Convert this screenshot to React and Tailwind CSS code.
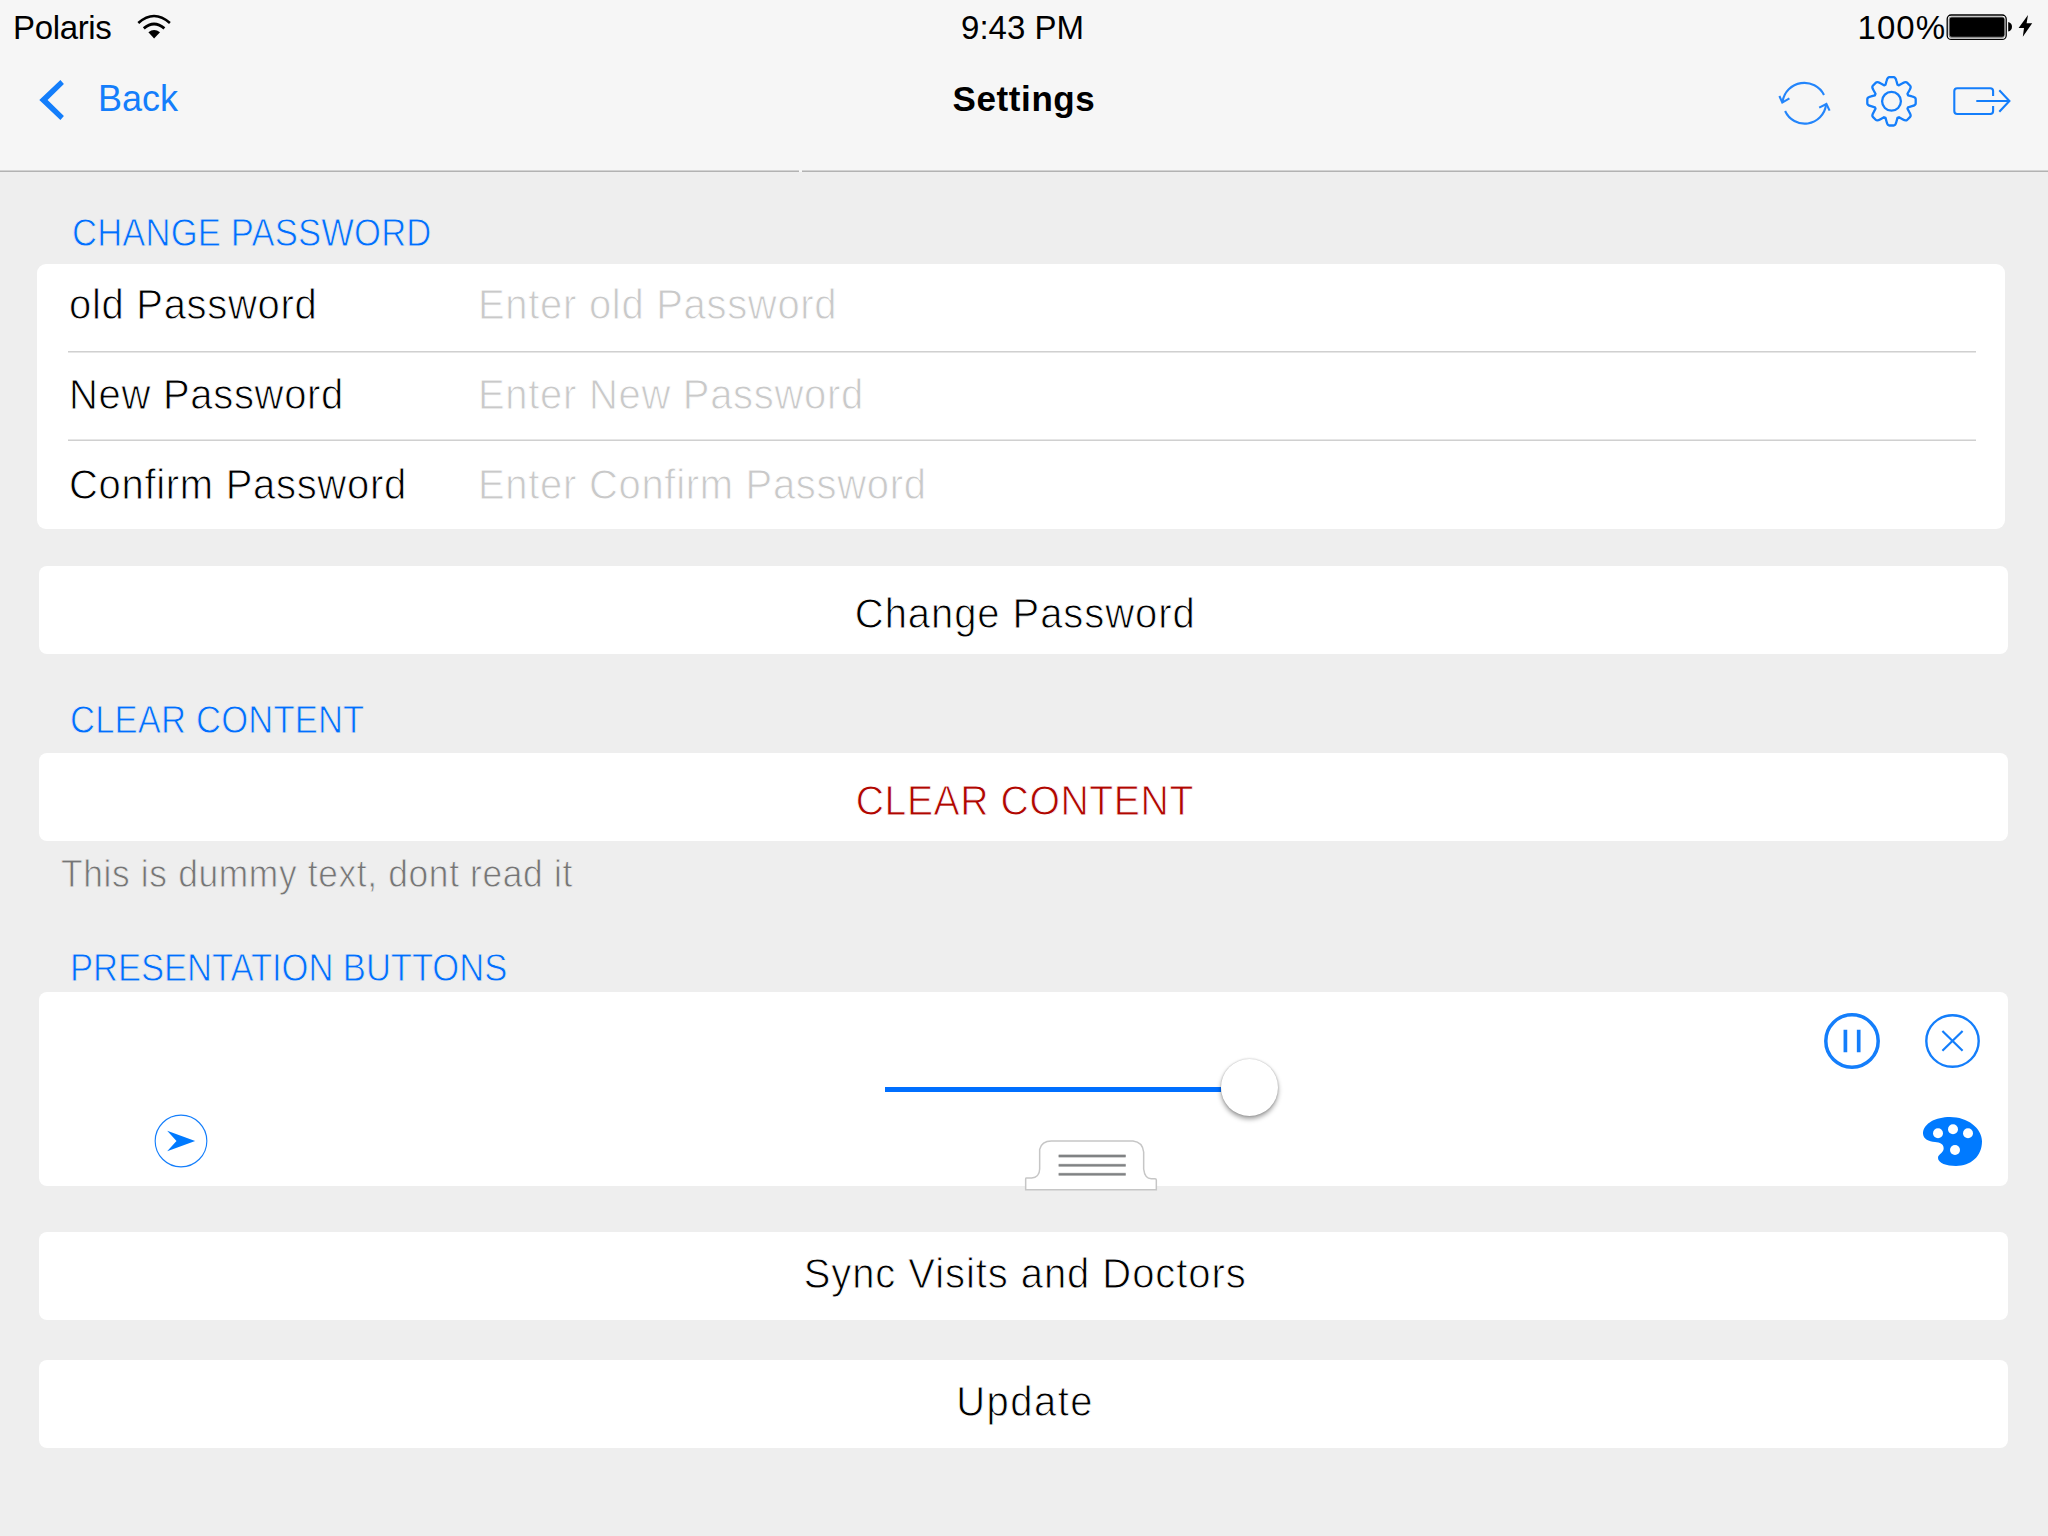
import React from "react";

const BLUE = "#147efb";

/* Light-weight Helvetica look: the stroke in the surface colour slims the glyphs. */
function Thin({ surface = "white", className = "", children }) {
  const stroke =
    surface === "white"
      ? "[-webkit-text-stroke:0.9px_#ffffff]"
      : "[-webkit-text-stroke:0.8px_#eeeeee]";
  return (
    <span className={`inline-block whitespace-nowrap ${stroke} ${className}`}>
      {children}
    </span>
  );
}

function WifiIcon() {
  return (
    <svg className="h-[55px] w-[36px]" viewBox="136 0 36 55" fill="none" stroke="#000">
      <path d="M138.3 23 Q154 9 169.9 23" strokeWidth="2.6" />
      <path d="M143.8 28.4 Q154 19.6 164.4 28.4" strokeWidth="2.8" />
      <path d="M148.4 32.2 Q154 27.6 160 32.2 L154.1 38.4 Z" fill="#000" stroke="none" />
    </svg>
  );
}

function BatteryIcon() {
  return (
    <svg className="h-[55px] w-[88px]" viewBox="1946 0 88 55">
      <rect x="1947.2" y="15" width="59" height="24.4" rx="4" fill="#fff" stroke="#000" strokeWidth="1.3" />
      <rect x="1948.6" y="16.5" width="56.2" height="21.4" rx="3" fill="#8d8d8d" />
      <rect x="1949.7" y="17.6" width="54.6" height="19.2" rx="2" fill="#000" />
      <path d="M2008.2 22 Q2012 23 2012 26.7 Q2012 30.4 2008.2 31.6 Z" fill="#000" />
      <path d="M2028 15 L2018.6 28 H2024 L2022.8 36.8 L2032.2 23.3 H2026.6 Z" fill="#000" />
    </svg>
  );
}

function BackIcon() {
  return (
    <svg className="h-[85px] w-[26px]" viewBox="39 55 26 85">
      <path d="M39.3 100 L60.4 79.9 L63.9 84 L47.6 100 L63.9 116 L60.4 120.1 Z" fill={BLUE} />
    </svg>
  );
}

function SyncIcon() {
  return (
    <svg className="h-[85px] w-[54px]" viewBox="1777 55 54 85" fill="none" stroke="#2385fb" strokeWidth="2.1">
      <path d="M1782.6 101.5 A22 22 0 0 1 1824 95" />
      <path d="M1779.4 96 L1782.3 102.6 L1789.4 98.4" />
      <path d="M1785.1 111 A21.5 21.5 0 0 0 1826 105" />
      <path d="M1819.2 107.6 L1826.4 104 L1829.6 110.6" />
    </svg>
  );
}

function gearPath() {
  const tooth = [
    [-6, -16.6],
    [-4.9, -20.5],
    [-4, -24.2],
    [-2.2, -24.2],
    [2.2, -24.2],
    [4, -24.2],
    [4.9, -20.5],
    [6, -16.6],
  ];
  let d = "";
  for (let i = 0; i < 8; i++) {
    const a = (i * Math.PI) / 4;
    const p = tooth.map(([x, y]) =>
      [x * Math.cos(a) - y * Math.sin(a), x * Math.sin(a) + y * Math.cos(a)]
        .map((v) => v.toFixed(2))
        .join(" ")
    );
    d += `${i === 0 ? "M" : "L"}${p[0]} L${p[1]} Q${p[2]} ${p[3]} L${p[4]} Q${p[5]} ${p[6]} L${p[7]} `;
  }
  return d + "Z";
}

function GearIcon() {
  return (
    <svg className="h-[85px] w-[54px]" viewBox="-26.5 -46.3 54 85" fill="none" stroke={BLUE} strokeWidth="2.3" strokeLinejoin="round">
      <path d={gearPath()} />
      <circle r="9.4" />
    </svg>
  );
}

function ExitIcon() {
  return (
    <svg className="h-[85px] w-[60px]" viewBox="1952 55 60 85" fill="none" stroke={BLUE} strokeWidth="2.1">
      <path d="M1993.1 96 V91 Q1993.1 88.2 1990.3 88.2 H1957.2 Q1954.3 88.2 1954.3 91 V111 Q1954.3 114 1957.2 114 H1990.3 Q1993.1 114 1993.1 111 V106" />
      <path d="M1976.3 101 H2009" />
      <path d="M1999.3 90.3 L2009.4 101 L1999.3 111.7" />
    </svg>
  );
}

function SendIcon() {
  return (
    <svg className="h-[54px] w-[54px]" viewBox="73.5 72 162 162">
      <circle cx="154.5" cy="153" r="77.5" fill="none" stroke={BLUE} strokeWidth="3.4" />
      <path d="M113 122 L197 153 L113 184 L141 153 Z" fill="#007aff" />
    </svg>
  );
}

function PauseIcon() {
  return (
    <svg className="size-[56px]" viewBox="0 0 56 56" fill="none" stroke={BLUE}>
      <circle cx="28" cy="28" r="26.2" strokeWidth="3.5" />
      <path d="M21.4 16.8 V39.2 M34.7 16.8 V39.2" strokeWidth="3.7" />
    </svg>
  );
}

function CloseIcon() {
  return (
    <svg className="size-[56px]" viewBox="0 0 56 56" fill="none" stroke={BLUE}>
      <ellipse cx="27.5" cy="28" rx="26.2" ry="25.8" strokeWidth="2.4" />
      <path d="M17.4 18 L37.6 37.8 M37.6 18 L17.4 37.8" strokeWidth="2.2" />
    </svg>
  );
}

function PaletteIcon() {
  return (
    <svg className="h-[49px] w-[59px]" viewBox="429 411 177 147">
      <path d="M429 458 C432 430 467 411 510 411 C562 411 606 444 606 484 C606 530 572 558 528 558 C500 558 474 549 474 534 C474 522 491 520 491 505 C491 492 480 487 465 486 C445 484 428 476 429 458 Z" fill="#007aff" />
      <g fill="#fff">
        <circle cx="474" cy="460" r="15" />
        <circle cx="519" cy="448" r="15" />
        <circle cx="564" cy="460" r="15" />
        <circle cx="525" cy="510" r="15" />
      </g>
    </svg>
  );
}

function DrawerTab() {
  return (
    <svg className="h-[51px] w-[134px]" viewBox="523 479 402 153">
      <path
        d="M528 628 V595 Q528 593 531 593 H546 C560 592 570 582 570 566 V507 C574 491 588 482 605 482 H850 C868 484 880 496 882 515 V566 C884 584 892 595 905 595 H916 Q920 595 920 599 V628 Z"
        fill="#fff"
        stroke="#c6c6c6"
        strokeWidth="4.5"
      />
      <path d="M627 527 H828 M627 555 H828 M627 582 H828" stroke="#c4c4c4" strokeWidth="10" />
      <path d="M627 527 H828 M627 555 H828 M627 582 H828" stroke="#808284" strokeWidth="6" />
    </svg>
  );
}

function SectionTitle({ className, tracking, children }) {
  return (
    <div className={`flex items-end ${className}`}>
      <Thin surface="gray" className={`origin-left scale-x-[0.91] text-[38px] leading-[44px] text-[#006eff] ${tracking}`}>
        {children}
      </Thin>
    </div>
  );
}

function ActionButton({ className, textClass, children }) {
  return (
    <button className={`flex h-[88px] w-[1969px] items-center justify-center rounded-[8px] bg-white pl-[3px] ${className}`}>
      <Thin className={`text-[43px] leading-[48px] ${textClass}`}>{children}</Thin>
    </button>
  );
}

function FieldRow({ label, hint, className }) {
  return (
    <div className={`flex items-center ${className}`}>
      <div className="w-[409px]">
        <Thin className="origin-left scale-x-[0.93] text-[43px] leading-[48px] tracking-[0.75px] text-black">
          {label}
        </Thin>
      </div>
      <Thin className="origin-left scale-x-[0.93] text-[43px] leading-[48px] tracking-[0.75px] text-[#c9c9c9]">
        {hint}
      </Thin>
    </div>
  );
}

export default function App() {
  return (
    <div className="flex h-[1536px] w-[2048px] flex-col overflow-hidden bg-[#eeeeee] font-['Liberation_Sans',Arial,sans-serif]">
      <header className="flex h-[172px] flex-col bg-[#f6f6f6]">
        <div className="grid h-[55px] grid-cols-3 items-center text-[33px] leading-[55px] text-black">
          <div className="flex items-center gap-[25px] pl-[13px]">
            <span className="w-[98px] tracking-[-0.35px]">Polaris</span>
            <WifiIcon />
          </div>
          <span className="pr-[3px] text-center">9:43 PM</span>
          <div className="flex items-center justify-end pr-[14px]">
            <span className="tracking-[1px]">100%</span>
            <BatteryIcon />
          </div>
        </div>
        <nav className="grid h-[115px] grid-cols-3 items-start">
          <div className="flex items-center pl-[39px]">
            <BackIcon />
            <span className="pt-[2px] pl-[33px] text-[36px] leading-[83px] text-[#147efb]">Back</span>
          </div>
          <h1 className="pt-px text-center text-[35px] leading-[85px] font-bold tracking-[0.6px] text-black">
            Settings
          </h1>
          <div className="flex items-center justify-end gap-[33.5px] pr-[36px]">
            <SyncIcon />
            <GearIcon />
            <ExitIcon />
          </div>
        </nav>
        <div className="flex h-[2px] gap-[3px]">
          <div className="w-[799px] border-t border-b border-t-[#d2d2d2] border-b-[#b2b2b2]" />
          <div className="flex-1 border-t border-b border-t-[#d2d2d2] border-b-[#b2b2b2]" />
        </div>
      </header>

      <main className="flex flex-col">
        <SectionTitle className="h-[92px] pb-[9px] pl-[71.5px]" tracking="tracking-[0.2px]">
          CHANGE PASSWORD
        </SectionTitle>
        <section className="ml-[37px] flex h-[265px] w-[1968px] flex-col rounded-[9px] bg-white pr-[29px] pl-[31px]">
          <FieldRow className="h-[87px] pb-[7px] pl-px" label="old Password" hint="Enter old Password" />
          <div className="h-[2px] border-t border-b border-t-[#d0d0d0] border-b-[#e6e6e6]" />
          <FieldRow className="h-[86px] pb-[4px] pl-px" label="New Password" hint="Enter New Password" />
          <div className="h-[2px] border-t border-b border-t-[#e6e6e6] border-b-[#d0d0d0]" />
          <FieldRow className="h-[88px] pb-[2px] pl-px" label="Confirm Password" hint="Enter Confirm Password" />
        </section>

        <ActionButton className="mt-[37px] ml-[39px] pt-[6px]" textClass="scale-x-[0.93] tracking-[1px] text-black">
          Change Password
        </ActionButton>

        <SectionTitle className="h-[99px] pb-[11px] pl-[69.5px]" tracking="tracking-[0.2px]">
          CLEAR CONTENT
        </SectionTitle>
        <ActionButton className="ml-[39px] pt-[5px]" textClass="scale-x-[0.91] tracking-[0.65px] text-[#b00600]">
          CLEAR CONTENT
        </ActionButton>
        <p className="h-[64px] pt-[11px] pl-[61px]">
          <Thin surface="gray" className="origin-left scale-x-[0.93] text-[38px] leading-[44px] tracking-[0.7px] text-[#757575]">
            This is dummy text, dont read it
          </Thin>
        </p>

        <SectionTitle className="h-[87px] pb-[2px] pl-[69.5px]" tracking="tracking-[-0.05px]">
          PRESENTATION BUTTONS
        </SectionTitle>
        <section className="ml-[39px] flex h-[194px] w-[1969px] rounded-[8px] bg-white">
          <div className="flex w-[846px] items-end pb-[18px] pl-[115px]">
            <SendIcon />
          </div>
          <div className="flex w-[392.5px] flex-col items-start pt-[66.5px]">
            <div className="flex h-[57px] w-full items-center">
              <div className="mt-[4px] h-[5px] flex-1 bg-[#006fff]" />
              <div className="size-[57px] rounded-full bg-white shadow-[0_3px_5px_rgba(0,0,0,0.38),0_0_2px_rgba(0,0,0,0.25)]" />
            </div>
            <div className="mt-[24px] ml-[139px] shrink-0">
              <DrawerTab />
            </div>
          </div>
          <div className="ml-auto flex flex-col items-end justify-between pt-[21px] pb-[20px]">
            <div className="flex gap-[45px] pr-[27px]">
              <PauseIcon />
              <CloseIcon />
            </div>
            <div className="pr-[26px]">
              <PaletteIcon />
            </div>
          </div>
        </section>

        <ActionButton className="mt-[46px] ml-[39px] pb-[6px]" textClass="scale-x-[0.93] tracking-[1px] text-black">
          Sync Visits and Doctors
        </ActionButton>
        <ActionButton className="mt-[40px] ml-[39px] pb-[6px]" textClass="scale-x-[0.93] tracking-[1.6px] text-black">
          Update
        </ActionButton>
      </main>
    </div>
  );
}
